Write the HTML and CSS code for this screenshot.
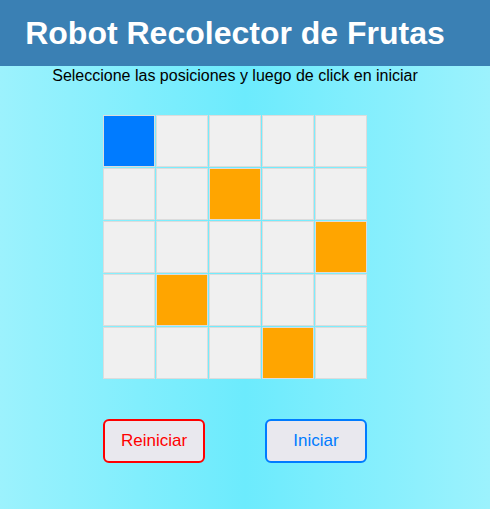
FILE: index.html
```html
<!DOCTYPE html>
<html lang="es">
<head>
<meta charset="utf-8">
<title>Robot Recolector de Frutas</title>
<link rel="stylesheet" href="styles.css">
</head>
<body>
<header class="header">
  <h1 class="title">Robot Recolector de Frutas</h1>
</header>
<main class="main">
  <p class="hint">Seleccione las posiciones y luego de click en iniciar</p>
  <div class="board">
    <div class="cell robot"></div><div class="cell"></div><div class="cell"></div><div class="cell"></div><div class="cell"></div>
    <div class="cell"></div><div class="cell"></div><div class="cell fruit"></div><div class="cell"></div><div class="cell"></div>
    <div class="cell"></div><div class="cell"></div><div class="cell"></div><div class="cell"></div><div class="cell fruit"></div>
    <div class="cell"></div><div class="cell fruit"></div><div class="cell"></div><div class="cell"></div><div class="cell"></div>
    <div class="cell"></div><div class="cell"></div><div class="cell"></div><div class="cell fruit"></div><div class="cell"></div>
  </div>
  <div class="actions">
    <button class="btn btn-reset">Reiniciar</button>
    <button class="btn btn-start">Iniciar</button>
  </div>
</main>
</body>
</html>
```
FILE: styles.css
```css
html, body {
  margin: 0;
  padding: 0;
}
body {
  width: 490px;
  height: 509px;
  overflow: hidden;
  font-family: "Liberation Sans", Arial, sans-serif;
  background: linear-gradient(to right, #9cf2fd 0%, #6cebfd 50%, #9cf2fd 100%);
}
.header {
  height: 66px;
  background: #3a80b4;
  width: 490px;
}
.title {
  margin: 0;
  width: 470px;
  text-align: center;
  color: #ffffff;
  font-size: 32px;
  font-weight: bold;
  line-height: 66px;
}
.main {
  width: 470px;
  display: flex;
  flex-direction: column;
  align-items: center;
}
.hint {
  margin: 0;
  font-size: 16px;
  line-height: 20px;
  color: #000;
}
.board {
  margin-top: 29px;
  display: grid;
  grid-template-columns: repeat(5, 52px);
  grid-auto-rows: 52px;
  gap: 1px;
}
.cell {
  box-sizing: border-box;
  border: 1px solid #dcdcdc;
  background: #f0f0f0;
}
.cell.robot {
  background: #007bff;
}
.cell.fruit {
  background: #ffa500;
}
.actions {
  margin-top: 40px;
  width: 264px;
  display: flex;
  justify-content: space-between;
}
.btn {
  box-sizing: border-box;
  width: 102px;
  height: 44px;
  border-radius: 6px;
  border: 2px solid;
  background: #e9e8ee;
  font-family: "Liberation Sans", Arial, sans-serif;
  font-size: 17px;
  padding: 0;
}
.btn-reset {
  border-color: #ff0000;
  color: #ff0000;
}
.btn-start {
  border-color: #007bff;
  color: #007bff;
}
```
